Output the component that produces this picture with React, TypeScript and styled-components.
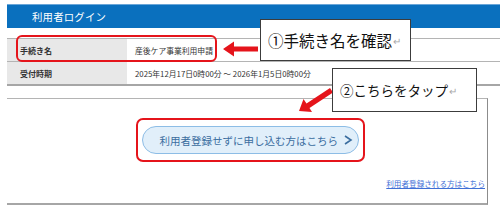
import React from "react";
import styled, { createGlobalStyle } from "styled-components";

const Global = createGlobalStyle`
    html, body {
        margin: 0;
        padding: 0;
        background: #ffffff;
        overflow: hidden;
    }
    body {
        font-family: "Noto Sans CJK JP", "Noto Sans", sans-serif;
        color: #222;
    }
`;

const Page = {
    Wrapper: styled.div`
        position: relative;
        width: 500px;
        height: 208px;
        padding: 4px 0 0 7px;
        box-sizing: border-box;
        overflow: hidden;
    `,
    Header: styled.div`
        width: 493px;
        height: 24px;
        display: flex;
        align-items: center;
        padding-left: 25px;
        box-sizing: border-box;
        background-color: #0a70be;
        border-top: 1px solid #6aa6d8;
        color: #ffffff;
        font-size: 10.4px;
        letter-spacing: 0.2px;
    `,
};

const Table = {
    Wrapper: styled.div`
        margin-top: 10px;
        width: 493px;
        border-top: 1px solid #b4b4b4;
    `,
    Row: styled.div<{ $last?: boolean }>`
        display: flex;
        height: 22px;
        border-bottom: ${(p) => (p.$last ? "2px solid #a6a6a6" : "1px solid #b4b4b4")};
    `,
    Label: styled.div`
        width: 120px;
        display: flex;
        align-items: center;
        padding-left: 13px;
        box-sizing: border-box;
        background-color: #e8e8e8;
        font-size: 8px;
        font-weight: 700;
        color: #333;
    `,
    Value: styled.div`
        flex: 1;
        display: flex;
        align-items: center;
        padding-left: 8px;
        font-size: 7.8px;
        color: #333;
    `,
};

const Panel = {
    Wrapper: styled.div`
        margin-top: 12px;
        width: 481px;
        height: 107px;
        box-sizing: border-box;
        border-top: 1px solid #b4b4b4;
        border-right: 1px solid #8c8c8c;
        border-bottom: 2px solid #a6a6a6;
        display: flex;
        flex-direction: column;
        align-items: center;
        padding-top: 19px;
    `,
    Marker: styled.div`
        margin-left: 7px;
        border: 2px solid #e5141b;
        border-radius: 7px;
        padding: 6px 4px;
    `,
    Button: styled.div`
        width: 217px;
        height: 28px;
        box-sizing: border-box;
        border: 1px solid #8dbde6;
        border-radius: 14px;
        background-color: #e1effa;
        display: flex;
        align-items: center;
        justify-content: flex-end;
        gap: 5px;
        padding-right: 5px;
        color: #3a6d9f;
        font-size: 10.5px;
    `,
    Chevron: styled.svg`
        display: block;
    `,
    LinkRow: styled.div`
        align-self: flex-end;
        margin-top: 6px;
        padding-right: 2px;
    `,
    Link: styled.a`
        color: #3f6fd6;
        font-size: 7.6px;
        text-decoration: underline;
    `,
};

const Note = {
    RowMark: styled.div`
        position: absolute;
        left: 16px;
        top: 35px;
        width: 201px;
        height: 27px;
        box-sizing: border-box;
        border: 2px solid #e5141b;
        border-radius: 6px;
    `,
    Callout: styled.div<{ $left: number; $top: number; $w: number; $h: number; $size: number }>`
        position: absolute;
        left: ${(p) => p.$left}px;
        top: ${(p) => p.$top}px;
        width: ${(p) => p.$w}px;
        height: ${(p) => p.$h}px;
        box-sizing: border-box;
        border: 1px solid #3c3c3c;
        background: #ffffff;
        display: flex;
        align-items: center;
        padding-left: 7px;
        font-size: ${(p) => p.$size}px;
        color: #111;
        white-space: nowrap;
    `,
    Return: styled.span`
        color: #a8a8a8;
        font-size: 10px;
        margin-left: 1px;
    `,
    Arrow: styled.svg`
        position: absolute;
        left: 0;
        top: 0;
        pointer-events: none;
    `,
};

export default function App() {
    return (
        <>
            <Global />
            <Page.Wrapper>
                <Page.Header>利用者ログイン</Page.Header>
                <Table.Wrapper>
                    <Table.Row>
                        <Table.Label>手続き名</Table.Label>
                        <Table.Value>産後ケア事業利用申請</Table.Value>
                    </Table.Row>
                    <Table.Row $last>
                        <Table.Label>受付時期</Table.Label>
                        <Table.Value>2025年12月17日0時00分 ～ 2026年1月5日0時00分</Table.Value>
                    </Table.Row>
                </Table.Wrapper>
                <Panel.Wrapper>
                    <Panel.Marker>
                        <Panel.Button>
                            <span>利用者登録せずに申し込む方はこちら</span>
                            <Panel.Chevron width="10" height="10" viewBox="0 0 10 10">
                                <polyline points="2,1 8,5 2,9" fill="none" stroke="#3a6d9f" strokeWidth="1.6" />
                            </Panel.Chevron>
                        </Panel.Button>
                    </Panel.Marker>
                    <Panel.LinkRow>
                        <Panel.Link href="#">利用者登録される方はこちら</Panel.Link>
                    </Panel.LinkRow>
                </Panel.Wrapper>

                <Note.RowMark />
                <Note.Arrow width="500" height="208" viewBox="0 0 500 208">
                    <polygon points="223,49 234,41.5 234,46.5 258,46.5 258,51.5 234,51.5 234,56.5" fill="#e5141b" />
                    <polygon points="299,111 303.5,99 306.5,103.5 330,88 333,92.5 309.5,108 312,112" fill="#e5141b" />
                </Note.Arrow>
                <Note.Callout $left={260} $top={19} $w={151} $h={42} $size={15.5}>
                    ①手続き名を確認<Note.Return>↵</Note.Return>
                </Note.Callout>
                <Note.Callout $left={332} $top={68} $w={145} $h={44} $size={13.5}>
                    ②こちらをタップ<Note.Return>↵</Note.Return>
                </Note.Callout>
            </Page.Wrapper>
        </>
    );
}
